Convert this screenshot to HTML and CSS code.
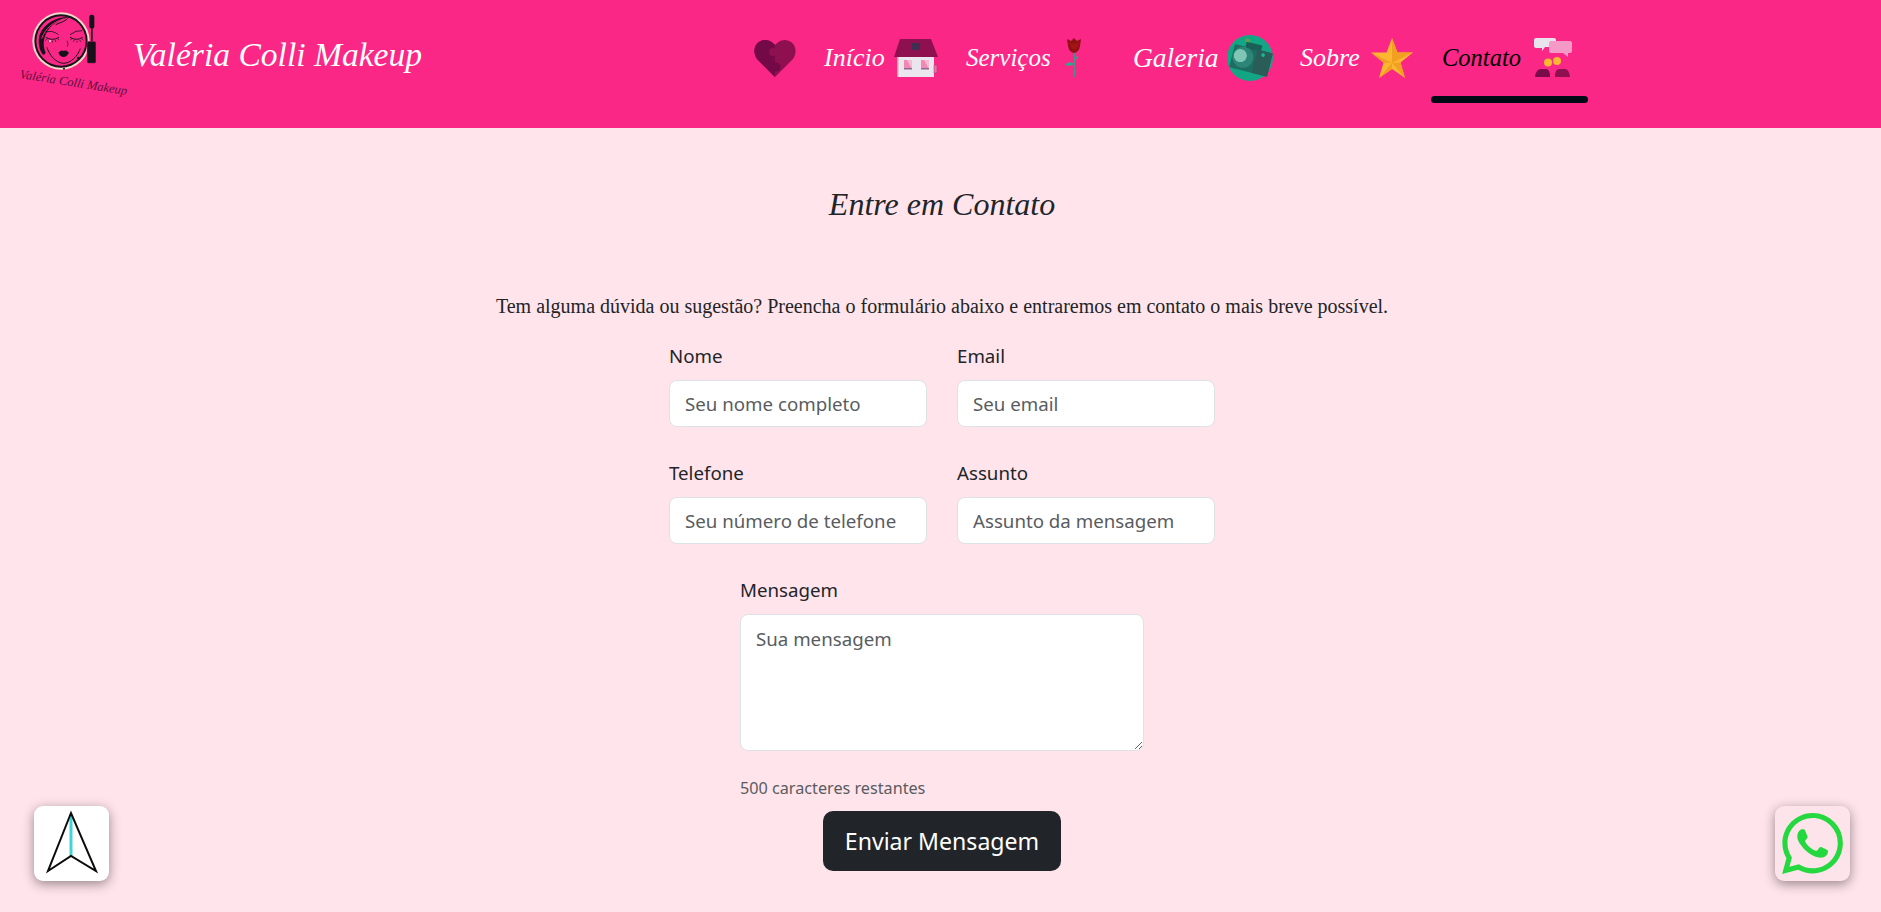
FILE: index.html
```html
<!DOCTYPE html>
<html lang="pt-BR">
<head>
<meta charset="utf-8">
<title>Contato - Valéria Colli Makeup</title>
<link rel="stylesheet" href="styles.css">
</head>
<body>
<header class="topbar">
  <a class="brand" href="#">
    <span class="logo">
      <svg class="logo-art" viewBox="15 10 85 60" width="85" height="60" aria-hidden="true">
        <g transform="translate(25 8) scale(.3333)">
          <circle cx="108" cy="99" r="86" fill="#f3d9c8"/>
          <circle cx="108" cy="99" r="80" fill="#17121a"/>
          <circle cx="108" cy="99" r="74" fill="#fb2787"/>
          <path d="M130 27C95 27 58 45 44 80C38 100 42 128 56 142L62 134C52 110 55 85 72 62C85 45 105 38 130 27Z" fill="#17121a"/>
          <path d="M118 32C88 40 60 60 50 92" fill="none" stroke="#fb2787" stroke-width="3"/>
          <path d="M132 27C124 40 104 44 92 50" fill="none" stroke="#17121a" stroke-width="3"/>
          <path d="M65 72Q82 66 100 80M135 80Q152 66 172 68" fill="none" stroke="#17121a" stroke-width="2.500"/>
          <path d="M62 88Q82 100 102 88M135 88Q155 100 173 88" fill="none" stroke="#17121a" stroke-width="3"/>
          <path d="M66 92l-5 6M74 96l-3 6M82 98v6M90 96l3 6M98 92l4 5M140 92l-4 5M148 96l-3 6M156 98v6M164 96l3 6M170 92l5 5" stroke="#17121a" stroke-width="2"/>
          <circle cx="75" cy="99" r="3" fill="#f3ead8"/>
          <path d="M126 98Q132 108 127 116" fill="none" stroke="#17121a" stroke-width="2"/>
          <path d="M66 118C72 140 92 165 116 166C136 165 156 148 166 122" fill="none" stroke="#17121a" stroke-width="3"/>
          <path d="M100 134Q110 124 116 129Q122 124 132 134Q124 147 116 147Q106 147 100 134Z" fill="#17121a"/>
          <circle cx="160" cy="150" r="4" fill="#17121a"/>
          <circle cx="117" cy="182" r="3" fill="#17121a"/>
          <rect x="193" y="20" width="15" height="42" rx="7" fill="#17121a"/>
          <rect x="198" y="60" width="5" height="42" fill="#17121a"/>
          <rect x="186" y="100" width="27" height="66" rx="5" fill="#17121a" stroke="#fb2787" stroke-width="1.500"/>
        </g>
      </svg>
      <span class="logo-sign">Valéria Colli Makeup</span>
    </span>
    <span class="brand-name">Valéria Colli Makeup</span>
  </a>
  <nav class="menu">
    <a class="item item-heart" href="#" aria-label="Favoritos">
      <svg viewBox="0 0 42 37" width="42" height="37" aria-hidden="true">
        <path d="M21 37L3 19C-2 12 0 1 11 0C16 0 19 3 21 5C23 3 26 0 31 0C42 1 44 12 39 19Z" fill="#8f1050"/>
        <path d="M21 37L3 19C-2 12 0 1 11 0C16 0 19 3 21 5V23A4 4 0 0 1 21 31Z" fill="#740947"/>
        <circle cx="19" cy="12" r="4" fill="#8f1050"/>
        <circle cx="22" cy="27" r="4.500" fill="#740947"/>
      </svg>
    </a>
    <a class="item item-home" href="#"><span class="label">Início</span>
      <svg viewBox="0 0 44 38" width="44" height="38" aria-hidden="true">
        <rect x="3" y="18" width="37" height="20" fill="#ebe5ef"/>
        <rect x="3" y="18" width="1.500" height="20" fill="#d8a6a0"/>
        <path d="M6 0H37L44 18H0Z" fill="#8f1050"/>
        <rect x="18" y="4" width="8" height="7" fill="#3c2f52"/>
        <rect x="10" y="21" width="8" height="9" fill="#f08ab4"/><path d="M13 21h5v9z" fill="#f9b9d2"/>
        <rect x="27" y="21" width="8" height="9" fill="#f08ab4"/><path d="M30 21h5v9z" fill="#f9b9d2"/>
        <rect x="10" y="29" width="8" height="1.500" fill="#8f6a90"/><rect x="27" y="29" width="8" height="1.500" fill="#8f6a90"/>
        <rect x="40" y="26" width="3" height="8" fill="#f06aa8" stroke="#a8366f" stroke-width=".5"/>
      </svg>
    </a>
    <a class="item item-serv" href="#"><span class="label">Serviços</span>
      <svg viewBox="0 0 20 40" width="20" height="40" aria-hidden="true">
        <path d="M11.500 14V39" stroke="#4d8f8c" stroke-width="1.300" fill="none"/>
        <path d="M11 26Q6 22 2 27Q7 29 11 26Z" fill="#27ad8a"/>
        <path d="M12 22Q14 19 15 18" stroke="#27ad8a" stroke-width="1.200" fill="none"/>
        <path d="M4 1L8 3L11 0L14 3L18 1L17 8Q16 14 11 15Q6 14 5 8Z" fill="#8f1111"/>
        <path d="M6 4Q11 7 16 4Q16 10 11 12Q7 10 6 4Z" fill="#a31515"/>
      </svg>
    </a>
    <a class="item item-gal" href="#"><span class="label">Galeria</span>
      <svg class="camera" viewBox="0 0 46 46" width="46" height="46" aria-hidden="true">
        <circle cx="23" cy="23" r="23" fill="#12a685"/>
        <g transform="rotate(14 23 23)">
          <rect x="5" y="13" width="39" height="24" rx="1" fill="#1d6e62"/>
          <rect x="16" y="8" width="16" height="6" fill="#1a5f55"/>
          <rect x="14" y="5" width="5" height="3" fill="#6b9b4b"/>
          <path d="M28 13h16v24H28z" fill="#2a5d57"/>
          <circle cx="16" cy="24" r="10.500" fill="#2d8577"/>
          <circle cx="13" cy="23" r="6.500" fill="#7fc6b5"/>
          <circle cx="35" cy="17" r="1.800" fill="#19b89a"/>
        </g>
      </svg>
    </a>
    <a class="item item-sobre" href="#"><span class="label">Sobre</span>
      <svg viewBox="0 0 42 40" width="42" height="40" aria-hidden="true">
        <path d="M21 0L26.500 14.500H42L29.500 24.500L34 40L21 31L8 40L12.500 24.500L0 14.500H15.500Z" fill="#fdb62f"/>
        <path d="M21 0L21 25L26.500 14.500ZM21 25L42 14.500H26.500ZM21 25L34 40L29.500 24.500ZM21 25L8 40L21 31ZM21 25L0 14.500L12.500 24.500Z" fill="#f1a022"/>
      </svg>
    </a>
    <a class="item item-contact" href="#"><span class="label">Contato</span>
      <svg viewBox="0 0 38 40" width="38" height="40" aria-hidden="true">
        <path d="M2 0H20Q22 0 22 2V9H11L8 13V10H2Q0 10 0 8V2Q0 0 2 0Z" fill="#e8e3ec"/>
        <path d="M17 3H36Q38 3 38 5V13Q38 15 36 15H34V19L29 15H17Q15 15 15 13V5Q15 3 17 3Z" fill="#f59ac6"/>
        <circle cx="14" cy="24.500" r="4" fill="#fdb62f"/><circle cx="23" cy="23" r="4" fill="#fdb62f"/>
        <path d="M1 39Q2 31 7 31H12Q16 31 16 39Z" fill="#7a0b4b"/>
        <path d="M21 39Q21 31 25 31H31Q35 31 36 39Z" fill="#8f1050"/>
      </svg>
    </a>
  </nav>
</header>

<main class="page">
  <h1 class="title">Entre em Contato</h1>
  <p class="intro">Tem alguma dúvida ou sugestão? Preencha o formulário abaixo e entraremos em contato o mais breve possível.</p>
  <form class="form">
    <div class="grid">
      <div class="field"><label for="n">Nome</label><input id="n" placeholder="Seu nome completo"></div>
      <div class="field"><label for="e">Email</label><input id="e" placeholder="Seu email"></div>
      <div class="field"><label for="t">Telefone</label><input id="t" placeholder="Seu número de telefone"></div>
      <div class="field"><label for="a">Assunto</label><input id="a" placeholder="Assunto da mensagem"></div>
    </div>
    <div class="message">
      <label for="m">Mensagem</label>
      <textarea id="m" placeholder="Sua mensagem"></textarea>
      <small class="counter">500 caracteres restantes</small>
    </div>
    <button type="button" class="send">Enviar Mensagem</button>
  </form>
</main>

<a class="float float-left" href="#" aria-label="Navegação">
  <svg viewBox="0 0 75 75" width="75" height="75" aria-hidden="true">
    <path d="M37 8V50" stroke="#45d3d3" stroke-width="3" fill="none"/>
    <path d="M37 7L14 65L37 50L62 65Z" fill="none" stroke="#0b0b0b" stroke-width="2" stroke-linejoin="miter"/>
  </svg>
</a>
<a class="float float-right" href="#" aria-label="WhatsApp">
  <svg viewBox="0 0 24 24" width="61" height="61" aria-hidden="true">
    <path fill="#25d83f" d="M17.472 14.382c-.297-.149-1.758-.867-2.03-.967-.273-.099-.471-.148-.67.15-.197.297-.767.966-.94 1.164-.173.199-.347.223-.644.075-.297-.15-1.255-.463-2.39-1.475-.883-.788-1.48-1.761-1.653-2.059-.173-.297-.018-.458.13-.606.134-.133.298-.347.446-.52.149-.174.198-.298.298-.497.099-.198.05-.371-.025-.52-.075-.149-.669-1.612-.916-2.207-.242-.579-.487-.5-.669-.51-.173-.008-.371-.01-.57-.01-.198 0-.52.074-.792.372-.272.297-1.04 1.016-1.04 2.479 0 1.462 1.065 2.875 1.213 3.074.149.198 2.096 3.2 5.077 4.487.709.306 1.262.489 1.694.625.712.227 1.36.195 1.871.118.571-.085 1.758-.719 2.006-1.413.248-.694.248-1.289.173-1.413-.074-.124-.272-.198-.57-.347m-5.421 7.403h-.004a9.87 9.87 0 01-5.031-1.378l-.361-.214-3.741.982.998-3.648-.235-.374a9.86 9.86 0 01-1.51-5.26c.001-5.45 4.436-9.884 9.888-9.884 2.64 0 5.122 1.03 6.988 2.898a9.825 9.825 0 012.893 6.994c-.003 5.45-4.437 9.884-9.885 9.884m8.413-18.297A11.815 11.815 0 0012.05 0C5.495 0 .16 5.335.157 11.892c0 2.096.547 4.142 1.588 5.945L.057 24l6.305-1.654a11.882 11.882 0 005.683 1.448h.005c6.554 0 11.89-5.335 11.893-11.893a11.821 11.821 0 00-3.48-8.413z"/>
  </svg>
</a>
</body>
</html>
```
FILE: styles.css
```css
* { box-sizing: border-box; }
html, body { height: 100%; }
body {
  margin: 0;
  background: #ffe4eb;
  color: #212529;
  font-family: "Noto Sans", "Open Sans", sans-serif;
  font-size: 18.7px;
  overflow: hidden;
}
a { text-decoration: none; color: inherit; }

.topbar {
  height: 128px;
  background: #fb2787;
  display: flex;
  align-items: flex-start;
}
.brand { display: flex; align-items: flex-start; color: #fff; }
.logo { display: flex; flex-direction: column; width: 118px; padding: 10px 0 0 15px; }
.logo-art { display: block; }
.logo-sign {
  font: italic 12.6px/14px "Liberation Serif", serif;
  color: #5c0f3c;
  white-space: nowrap;
  transform: rotate(9deg);
  transform-origin: left center;
  margin: -3px 0 0 5px;
}
.brand-name {
  width: 289px;
  font: italic 33.6px/44px "Liberation Serif", serif;
  margin: 33px 0 0 15px;
  white-space: nowrap;
}

.menu { display: flex; align-items: flex-start; margin-left: 332px; }
.item {
  display: flex;
  align-items: center;
  justify-content: space-between;
  height: 128px;
  padding-bottom: 12px;
  color: #fff;
}
.label { font: italic 26px/32px "Liberation Serif", serif; white-space: nowrap; }
.item-heart { width: 42px; }
.item-home { width: 114px; margin-left: 28px; }
.item-serv { width: 117px; margin-left: 28px; }
.item-serv .label { font-size: 25px; }
.item-gal { width: 140px; margin-left: 50px; }
.item-gal .label { font-size: 27.5px; }
.item-sobre { width: 113px; margin-left: 27px; }
.item-contact {
  width: 157px;
  margin-left: 18px;
  padding: 0 16px 12px 11px;
  color: #000;
  position: relative;
}
.item-contact .label { font-size: 24.5px; }
.item-contact::after {
  content: "";
  position: absolute;
  left: 0;
  right: 0;
  top: 96px;
  height: 7px;
  border-radius: 4px;
  background: #000a14;
}

.page { padding: 0 0 0 3px; display: flex; flex-direction: column; align-items: center; }
.title {
  margin: 50px 0 0;
  font: italic 400 32px/52px "Liberation Serif", serif;
  color: #212529;
}
.intro {
  margin: 62px 0 0;
  font: 400 20px/28px "Liberation Serif", serif;
  white-space: nowrap;
}
.form { display: flex; flex-direction: column; align-items: center; margin-top: 22px; }
.grid { display: grid; grid-template-columns: 258px 258px; column-gap: 30px; row-gap: 32px; }
.field { display: flex; flex-direction: column; }
label { display: block; line-height: 27px; margin-bottom: 11px; }
input, textarea {
  display: block;
  width: 100%;
  border: 1px solid #dee2e6;
  border-radius: 8px;
  background: #fff;
  font: inherit;
  padding: 7px 15px;
  color: #212529;
  outline: none;
}
input { height: 47px; }
input::placeholder, textarea::placeholder { color: #595c5f; opacity: 1; }
.message { width: 404px; margin-top: 32px; }
textarea { height: 137px; padding-top: 9px; line-height: 29px; resize: vertical; }
.counter { display: block; margin-top: 24px; font-size: 16.2px; line-height: 26px; color: #595c5f; }
.send {
  width: 238px;
  height: 60px;
  margin-top: 10px;
  border: 0;
  border-radius: 10px;
  background: #212529;
  color: #fff;
  font: inherit;
  font-size: 23.1px;
}

.float {
  position: fixed;
  bottom: 31px;
  width: 75px;
  height: 75px;
  border-radius: 9px;
  box-shadow: 0 3px 12px rgba(0, 0, 0, .42);
  display: flex;
  align-items: center;
  justify-content: center;
}
.float-left { left: 34px; background: #fff; }
.float-right { right: 31px; background: #fde3ea; }
```
